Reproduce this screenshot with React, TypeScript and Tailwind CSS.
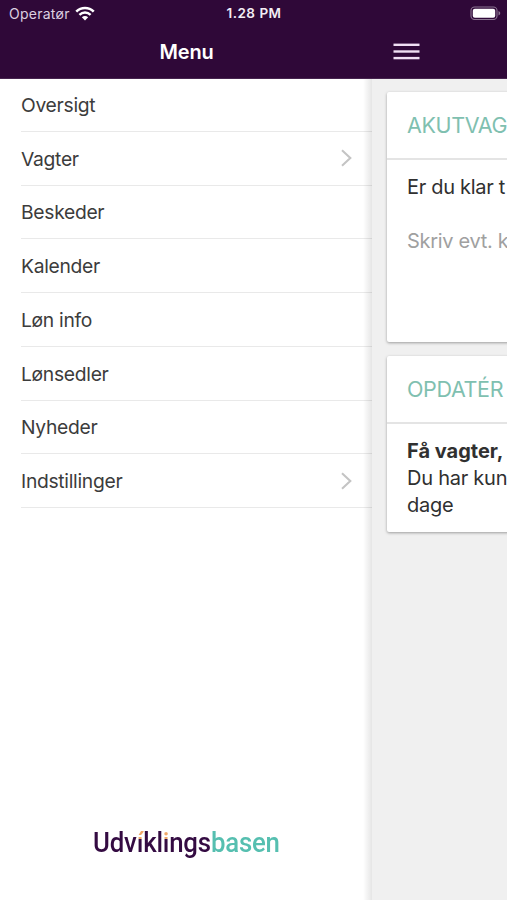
type MenuEntry = {
    label: string,
    submenu?: boolean
}

const entries: MenuEntry[] = [
    { label: 'Oversigt' },
    { label: 'Vagter', submenu: true },
    { label: 'Beskeder' },
    { label: 'Kalender' },
    { label: 'Løn info' },
    { label: 'Lønsedler' },
    { label: 'Nyheder' },
    { label: 'Indstillinger', submenu: true },
];

export default function App() {
    return (
        <div className="flex flex-col w-[507px] h-[900px] overflow-hidden
            bg-white font-['Inter',sans-serif] text-[#3c3c3c]">
            <header className="h-[79px] shrink-0 bg-[#2f0838] text-white
                border-b border-[#46244e]">
                <StatusBar />
                <div className="flex h-[50px] items-center">
                    <h1 className="w-[373px] text-center text-[20px] font-semibold tracking-[-0.2px]">
                        Menu
                    </h1>
                    <button className="ml-[20px]" aria-label="Menu">
                        <svg width="27" height="18" viewBox="0 0 27 18" fill="#f0dff4">
                            <rect x="0.5" y="0.6" width="26" height="2.4" />
                            <rect x="0.5" y="7.3" width="26" height="2.4" />
                            <rect x="0.5" y="13.9" width="26" height="2.4" />
                        </svg>
                    </button>
                </div>
            </header>
            <div className="flex flex-1 min-h-0">
                <Drawer />
                <Overview />
            </div>
        </div>
    );
}

function StatusBar() {
    return (
        <div className="grid h-[27px] grid-cols-3 items-center pl-[9px] pr-[6px]">
            <div className="flex items-center text-[14px] tracking-[0.25px] text-[#dccfe0]">
                <span>Operatør</span>
                <svg className="ml-[5px] -mt-px" width="20" height="15" viewBox="0 0 19 14" fill="none">
                    <path d="M1.2 5.2C5.9 .7 13.1 .7 17.8 5.2" stroke="white" strokeWidth="2.5" />
                    <path d="M4.2 8.2C7.2 5.4 11.8 5.4 14.8 8.2" stroke="white" strokeWidth="2.3" />
                    <path d="M6.5 10.6C8.2 9 10.8 9 12.5 10.6L9.5 13.6Z" fill="white" />
                </svg>
            </div>
            <div className="pr-[2px] text-center text-[13.5px] font-semibold tracking-[0.5px] text-[#f3edf5]">1.28 PM</div>
            <svg className="justify-self-end" width="31" height="15" viewBox="0 0 31 15" fill="none">
                <rect x="1" y="1" width="26" height="12.5" rx="3.6" stroke="#8c7592" strokeWidth="1.1" />
                <rect x="2.8" y="2.7" width="22.4" height="9" rx="2" fill="white" />
                <path d="M28.5 5.1C30.8 6 30.8 8.5 28.5 9.4Z" fill="#8c7592" />
            </svg>
        </div>
    );
}

function Drawer() {
    return (
        <nav className="relative flex w-[372px] shrink-0 flex-col">
            <ul className="-mt-[1px]">
                {entries.map((entry) => (
                    <li key={entry.label}
                        className="ml-[21px] flex h-[53.75px] items-center justify-between
                            border-b border-[#e9e9e9] pt-[2px] pr-[19px] text-[19.3px] tracking-[-0.3px]">
                        {entry.label}
                        {entry.submenu &&
                            <svg className="mb-[2px]" width="13" height="18" viewBox="0 0 13 18" fill="none">
                                <path d="M2 1.3L10.3 9L2 16.7" stroke="#c4c4c4" strokeWidth="2.1" />
                            </svg>
                        }
                    </li>
                ))}
            </ul>
            <Logo />
            <div className="absolute inset-y-0 right-0 w-[9px]
                bg-linear-to-r from-transparent to-black/10" />
        </nav>
    );
}

function Logo() {
    return (
        <div className="mt-auto mb-[40px] ml-[93px] flex origin-left scale-x-[0.955] whitespace-nowrap
            font-['Roboto',sans-serif] text-[27px] leading-[34px] font-medium
            tracking-[-0.2px] text-[#340b42]">
            <span>Udv<LogoI letter="í" />kl<LogoI letter="i" />ngs</span>
            <span className="text-[#56bfb0]">basen</span>
        </div>
    );
}

// The letter keeps its stem colour, only the dot is orange
function LogoI({letter}: {letter: string}) {
    return (
        <span className="bg-linear-to-b from-[#f0a868] from-36% to-[#340b42] to-36%
            bg-clip-text text-transparent">{letter}</span>
    );
}

function Overview() {
    return (
        <main className="flex-1 overflow-hidden bg-[#f0f0f0] pl-[15px] pt-[13px]">
            <div className="flex w-[440px] flex-col gap-[14px]">
                <section className="h-[250px] rounded-[2px] bg-white shadow-[0_1px_3px_rgba(0,0,0,0.35)]">
                    <CardTitle text="AKUTVAG" />
                    <div className="px-5 text-[20px] leading-[27px] tracking-[-0.3px] whitespace-nowrap">
                        <p className="pt-[14px] text-[#303030]">Er du klar t</p>
                        <p className="pt-[27px] text-[#a0a0a0]">Skriv evt. k</p>
                    </div>
                </section>
                <section className="h-[176px] rounded-[2px] bg-white shadow-[0_1px_3px_rgba(0,0,0,0.35)]">
                    <CardTitle text="OPDATÉR" />
                    <div className="px-5 pt-[14px] text-[20px] leading-[27px] tracking-[-0.25px] text-[#303030]">
                        <p className="font-bold tracking-normal">Få vagter,</p>
                        <p>Du har kun<br />dage</p>
                    </div>
                </section>
            </div>
        </main>
    );
}

function CardTitle({text}: {text: string}) {
    return (
        <h2 className="flex h-[68px] items-center border-b-2 border-[#e4e4e4]
            px-5 text-[21.5px] tracking-[-0.35px] text-[#7fc0b0]">
            {text}
        </h2>
    );
}
